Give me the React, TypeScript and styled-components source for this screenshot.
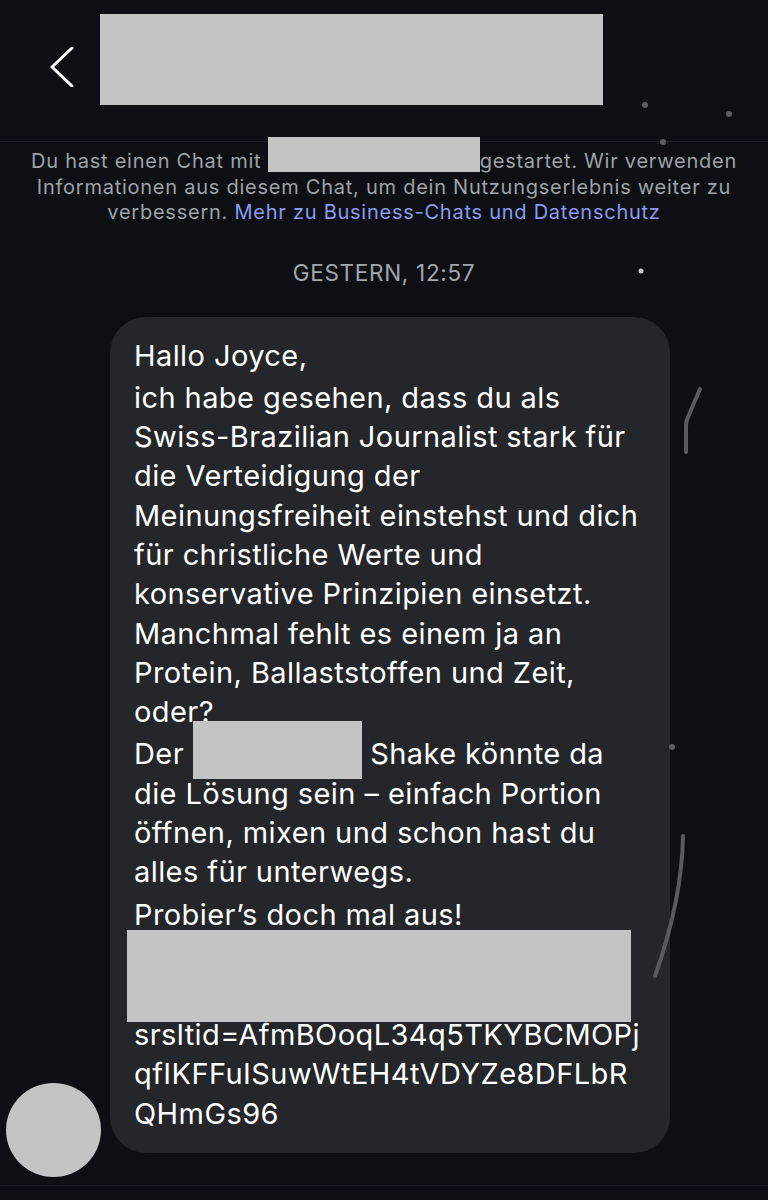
import React from "react";
import styled, { createGlobalStyle } from "styled-components";

const Global = createGlobalStyle`
  html, body { margin: 0; padding: 0; background: #0d0f14; }
  * { box-sizing: border-box; }
`;

const Page = styled.div`
  position: relative;
  width: 768px;
  height: 1200px;
  overflow: hidden;
  background: #0d0f14;
  font-family: Inter, "Noto Sans", sans-serif;
  display: flex;
  flex-direction: column;
`;

const Header = styled.header`
  height: 142px;
  flex: none;
  border-bottom: 1px solid #1d2026;
  display: flex;
  align-items: flex-start;
  padding: 14px 0 0 50px;
`;

const BackIcon = styled.svg`
  width: 24px;
  height: 40px;
  margin-top: 33px;
  flex: none;
`;

const Redact = styled.div<{ $w: number; $h: number }>`
  background: #c4c4c4;
  width: ${(p) => p.$w}px;
  height: ${(p) => p.$h}px;
  flex: none;
`;

const TitleRedact = styled(Redact)`
  margin-left: 26px;
`;

const Notice = styled.p`
  margin: 0;
  padding: 7px 0 0;
  text-align: center;
  font-size: 20px;
  line-height: 25.5px;
  color: #9fa2a8;
  letter-spacing: 0.75px;
`;

const InlineRedact = styled.span<{ $w: number; $h: number; $mt: number; $mb: number }>`
  display: inline-block;
  background: #c4c4c4;
  width: ${(p) => p.$w}px;
  height: ${(p) => p.$h}px;
  margin-top: ${(p) => p.$mt}px;
  margin-bottom: ${(p) => p.$mb}px;
  vertical-align: baseline;
`;

const Link = styled.span`
  color: #8b9bef;
`;

const DateLabel = styled.div`
  margin-top: 34px;
  text-align: center;
  font-size: 22.5px;
  line-height: 26px;
  color: #a3a6ac;
  letter-spacing: 0.7px;
`;

const MessageRow = styled.div`
  margin-top: 31px;
  display: flex;
  align-items: flex-end;
  padding-left: 6px;
`;

const Avatar = styled.div`
  width: 95px;
  height: 94px;
  border-radius: 50%;
  background: #c4c4c4;
  flex: none;
`;

const Bubble = styled.div`
  margin-left: 9px;
  margin-bottom: 24px;
  width: 560px;
  background: #25262a;
  border-radius: 36px;
  padding: 19px 20px 20px 24px;
  color: #ffffff;
  font-size: 29px;
  line-height: 39.3px;
  letter-spacing: 0.42px;
`;

const Paragraph = styled.div<{ $gap?: number }>`
  margin-top: ${(p) => p.$gap ?? 3}px;
`;

const Line = styled.div`
  white-space: nowrap;
`;

const BlockRedact = styled.div`
  background: #c4c4c4;
  width: 504px;
  height: 92px;
  margin: -4px 0 -7px -7px;
`;

const BottomRule = styled.div`
  margin-top: 8px;
  border-top: 1px solid #1d2026;
`;

const Artifacts = styled.svg`
  position: absolute;
  left: 0;
  top: 0;
  width: 768px;
  height: 1200px;
  pointer-events: none;
`;

export default function App() {
  return (
    <>
      <Global />
      <Page>
        <Header>
          <BackIcon viewBox="0 0 24 40">
            <polyline
              points="22,1 2,20 22,39"
              fill="none"
              stroke="#ffffff"
              strokeWidth="3"
              strokeLinecap="round"
              strokeLinejoin="round"
            />
          </BackIcon>
          <TitleRedact $w={503} $h={91} />
        </Header>
        <Notice>
          Du hast einen Chat mit{" "}
          <InlineRedact $w={212} $h={35} $mt={-14} $mb={-4} />
          gestartet. Wir verwenden
          <br />
          Informationen aus diesem Chat, um dein Nutzungserlebnis weiter zu
          <br />
          verbessern. <Link>Mehr zu Business-Chats und Datenschutz</Link>
        </Notice>
        <DateLabel>GESTERN, 12:57</DateLabel>
        <MessageRow>
          <Avatar />
          <Bubble>
            <Paragraph $gap={0}>
              <Line>Hallo Joyce,</Line>
            </Paragraph>
            <Paragraph>
              <Line>ich habe gesehen, dass du als</Line>
              <Line>Swiss-Brazilian Journalist stark für</Line>
              <Line>die Verteidigung der</Line>
              <Line>Meinungsfreiheit einstehst und dich</Line>
              <Line>für christliche Werte und</Line>
              <Line>konservative Prinzipien einsetzt.</Line>
              <Line>Manchmal fehlt es einem ja an</Line>
              <Line>Protein, Ballaststoffen und Zeit,</Line>
              <Line>oder?</Line>
            </Paragraph>
            <Paragraph>
              <Line>
                Der{" "}
                <InlineRedact $w={169} $h={58} $mt={-20} $mb={-15} />
                {" "}Shake könnte da
              </Line>
              <Line>die Lösung sein – einfach Portion</Line>
              <Line>öffnen, mixen und schon hast du</Line>
              <Line>alles für unterwegs.</Line>
            </Paragraph>
            <Paragraph>
              <Line>Probier’s doch mal aus!</Line>
            </Paragraph>
            <BlockRedact />
            <Line>srsltid=AfmBOoqL34q5TKYBCMOPj</Line>
            <Line>qfIKFFuISuwWtEH4tVDYZe8DFLbR</Line>
            <Line>QHmGs96</Line>
          </Bubble>
        </MessageRow>
        <BottomRule />
        <Artifacts viewBox="0 0 768 1200">
          <g fill="#5c5d61">
            <circle cx="645" cy="105" r="3" />
            <circle cx="729" cy="114" r="3" />
            <circle cx="663" cy="142" r="3" />
            <circle cx="672" cy="747" r="3" />
          </g>
          <circle cx="641" cy="271" r="2.5" fill="#c8c9cc" />
          <g fill="none" stroke="#5a5b5e" strokeWidth="4" strokeLinecap="round">
            <path d="M700 389 L688 417 Q686 421 686 426 L686 452" />
            <path d="M683 836 Q682 900 655 976" />
          </g>
        </Artifacts>
      </Page>
    </>
  );
}
